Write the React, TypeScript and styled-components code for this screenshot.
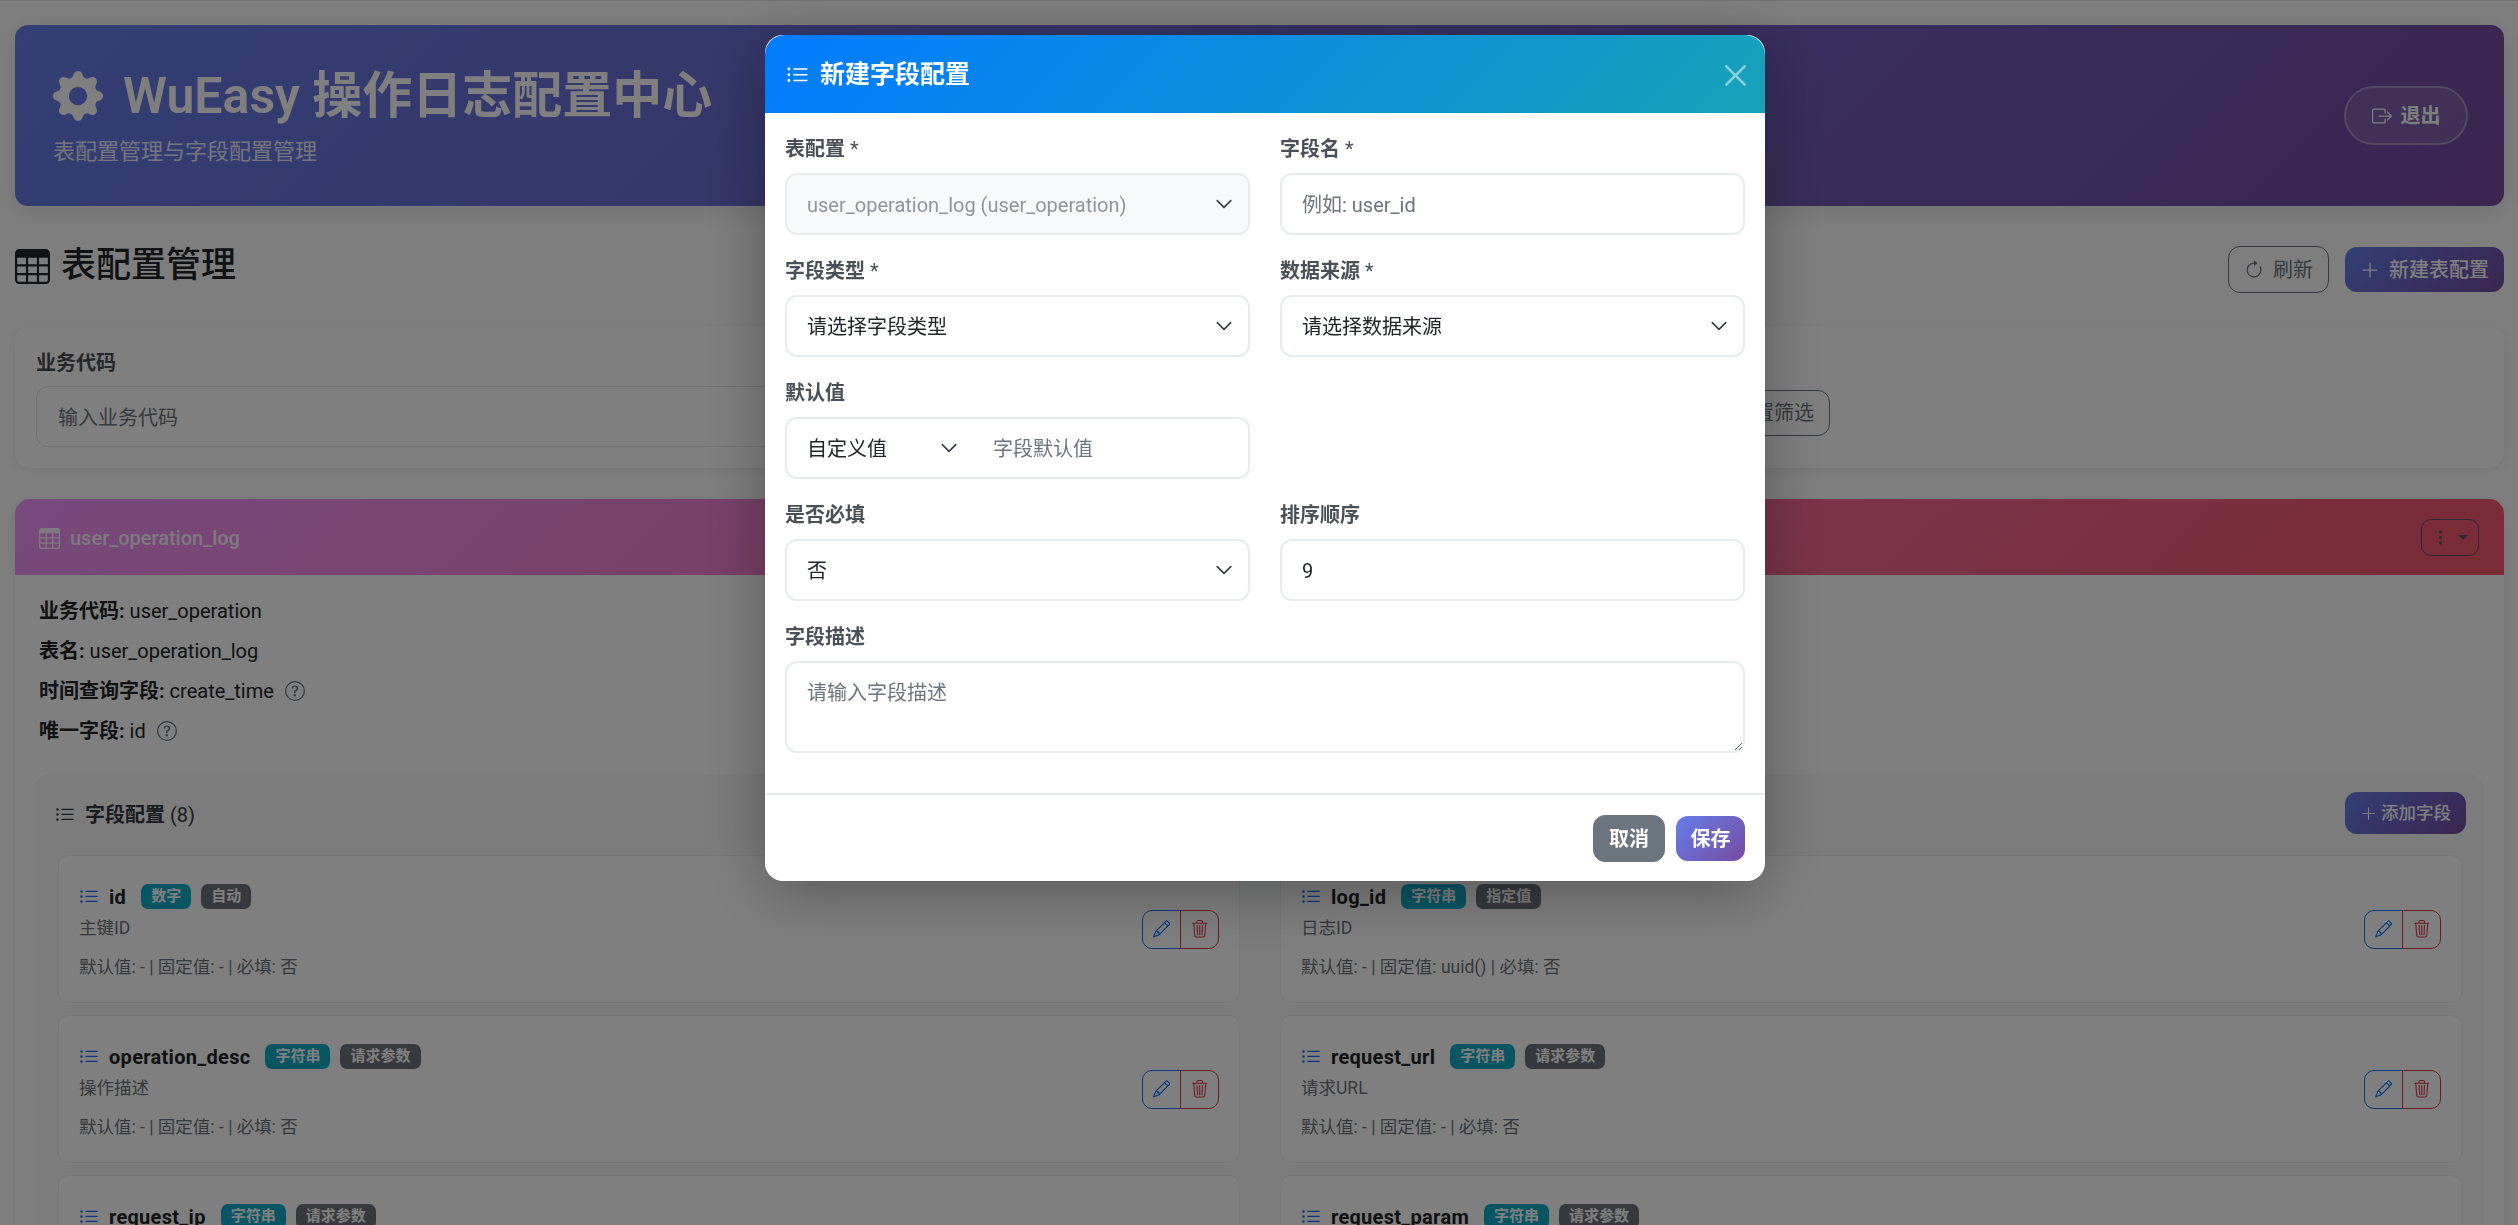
import React from 'react';
import styled, { createGlobalStyle } from 'styled-components';
import {
  BsArrowClockwise,
  BsBoxArrowRight,
  BsGearFill,
  BsListUl,
  BsPencil,
  BsPlusLg,
  BsQuestionCircle,
  BsTable,
  BsThreeDotsVertical,
  BsTrash3,
} from 'react-icons/bs';

const chevron = encodeURIComponent(
  '<svg xmlns="http://www.w3.org/2000/svg" viewBox="0 0 16 16"><path fill="none" stroke="#343a40" stroke-linecap="round" stroke-linejoin="round" stroke-width="1.4" d="m2 5 6 6 6-6"/></svg>'
);

const GlobalStyle = createGlobalStyle`
  html, body {
    margin: 0;
    padding: 0;
    height: 100%;
    overflow: hidden;
    background: #fdfdfd;
  }
  body {
    font-family: Roboto, "Noto Sans CJK SC", sans-serif;
    font-size: 20px;
    line-height: 1.5;
    color: #212529;
  }
  * {
    box-sizing: border-box;
  }
`;

const Page = styled.div`
  height: 1225px;
  overflow: hidden;
  padding: 24px 14px 0 15px;
  border-top: 1px solid #e4e4e4;
`;

const PrimaryGradient = 'linear-gradient(135deg, #667eea 0%, #764ba2 100%)';

const Banner = styled.header`
  height: 181px;
  border-radius: 13px;
  background: ${PrimaryGradient};
  color: #fff;
  padding: 0 36px 0 38px;
  display: flex;
  align-items: center;
  justify-content: space-between;
  box-shadow: 0 5px 25px rgba(0, 0, 0, 0.1);
`;

const BannerText = styled.div`
  padding-top: 2px;
`;

const BannerTitle = styled.h1`
  margin: 0 0 9px;
  font-size: 50px;
  font-weight: 600;
  line-height: 1.2;
  display: flex;
  align-items: center;
  gap: 20px;
`;

const BannerSub = styled.p`
  margin: 0;
  font-size: 22px;
  opacity: 0.85;
`;

const LogoutButton = styled.button`
  width: 124px;
  height: 59px;
  border-radius: 30px;
  border: 2px solid rgba(255, 255, 255, 0.3);
  background: rgba(255, 255, 255, 0.1);
  color: #fff;
  font: inherit;
  font-weight: 600;
  display: flex;
  align-items: center;
  justify-content: center;
  gap: 9px;
`;

const TitleRow = styled.div`
  display: flex;
  align-items: center;
  justify-content: space-between;
  height: 47px;
  margin: 40px 0 33px;
`;

const SectionTitle = styled.h3`
  margin: 0 0 7px;
  font-size: 35px;
  font-weight: 500;
  line-height: 1.2;
  display: flex;
  align-items: center;
  gap: 11px;
`;

const Buttons = styled.div`
  display: flex;
  align-items: center;
  gap: 16px;
`;

const OutlineButton = styled.button`
  height: 47px;
  padding: 0 15px;
  border: 1px solid #6c757d;
  border-radius: 12px;
  background: transparent;
  color: #6c757d;
  font: inherit;
  display: flex;
  align-items: center;
  gap: 9px;
`;

const GradientButton = styled.button<{ $small?: boolean }>`
  height: ${(p) => (p.$small ? '42px' : '45px')};
  padding: 0 15px;
  border: none;
  border-radius: 12px;
  background: ${PrimaryGradient};
  color: #fff;
  font: inherit;
  font-size: ${(p) => (p.$small ? '17.5px' : '20px')};
  font-weight: 500;
  display: flex;
  align-items: center;
  gap: ${(p) => (p.$small ? '4px' : '9px')};
`;

const FilterCard = styled.section`
  height: 142px;
  border-radius: 15px;
  background: #fff;
  box-shadow: 0 3px 12px rgba(0, 0, 0, 0.08);
  padding: 21px;
  display: flex;
  align-items: flex-start;
`;

const FilterField = styled.div`
  width: 1671px;
`;

const FilterButton = styled(OutlineButton)`
  height: 46px;
  margin-top: 43px;
  width: 123px;
  justify-content: flex-end;
`;

const FilterLabel = styled.label`
  display: block;
  height: 30px;
  margin-bottom: 9px;
  line-height: 32px;
  font-weight: 600;
  color: #495057;
`;

const FilterInput = styled.input`
  display: block;
  width: 100%;
  height: 61px;
  padding: 2px 21px 0;
  border: 1px solid #dee2e6;
  border-radius: 12px;
  font: inherit;
  background: #fff;
  &::placeholder {
    color: #6c757d;
  }
`;

const TableCard = styled.section`
  margin-top: 31px;
  border-radius: 15px 15px 0 0;
  background: #fff;
  box-shadow: 0 3px 12px rgba(0, 0, 0, 0.08);
`;

const TableHead = styled.div`
  height: 76px;
  padding: 0 25px 0 24px;
  border-radius: 15px 15px 0 0;
  background: linear-gradient(135deg, #f093fb 0%, #f5576c 100%);
  color: #fff;
  display: flex;
  align-items: center;
  justify-content: space-between;
`;

const TableName = styled.div`
  padding-top: 2px;
  font-weight: 500;
  opacity: 0.9;
  display: flex;
  align-items: center;
  gap: 10px;
`;

const MenuButton = styled.button`
  width: 58px;
  height: 37px;
  padding: 0;
  border: 1px solid #4f565d;
  border-radius: 10px;
  background: transparent;
  color: #4f565d;
  display: flex;
  align-items: center;
  justify-content: center;
  gap: 9px;
  &::after {
    content: '';
    border-top: 5px solid #4f565d;
    border-left: 5px solid transparent;
    border-right: 5px solid transparent;
  }
`;

const TableBody = styled.div`
  padding: 21px 20px 0 19px;
`;

const InfoLine = styled.div`
  height: 30px;
  margin: 0 5px 10px;
  display: flex;
  align-items: center;
  white-space: pre;
  b {
    font-weight: 700;
  }
`;

const HelpIcon = styled(BsQuestionCircle)`
  margin-left: 11px;
  color: #6c757d;
`;

const FieldsPanel = styled.div`
  margin-top: 28px;
  padding: 18px 18px 0 24px;
  border-radius: 15px 15px 0 0;
  background: #f8f9fa;
`;

const FieldsHead = styled.div`
  height: 42px;
  margin-bottom: 21px;
  display: flex;
  align-items: center;
  justify-content: space-between;
`;

const FieldsTitle = styled.div`
  padding-top: 3px;
  color: #343a40;
  display: flex;
  align-items: center;
  gap: 10px;
  margin-left: -3px;
  b {
    font-weight: 600;
  }
`;

const FieldGrid = styled.div`
  display: grid;
  grid-template-columns: 1182px 1182px;
  column-gap: 40px;
  row-gap: 12px;
`;

const FieldItem = styled.div`
  height: 148px;
  padding: 0 20px;
  border: 1px solid #efefef;
  border-radius: 10px;
  background: #fff;
  display: flex;
  align-items: center;
  justify-content: space-between;
`;

const FieldText = styled.div`
  padding-top: 3px;
`;

const FieldName = styled.div`
  display: flex;
  align-items: center;
  height: 30px;
  margin-bottom: 3px;
  color: #0d6efd;
`;

const FieldKey = styled.span`
  margin: 0 15px 0 10px;
  font-weight: 700;
  letter-spacing: 0.3px;
  color: #212529;
`;

const Badge = styled.span<{ $tone: 'info' | 'muted' }>`
  margin-right: 10px;
  padding: 0 10px;
  height: 25px;
  line-height: 25px;
  border-radius: 7px;
  font-size: 15px;
  font-weight: 700;
  color: #fff;
  background: ${(p) => (p.$tone === 'info' ? '#12abc8' : '#6c757d')};
`;

const FieldDesc = styled.div`
  font-size: 17.5px;
  line-height: 26px;
  color: #6c757d;
  margin-bottom: 13px;
`;

const FieldMeta = styled.div`
  font-size: 17.5px;
  line-height: 26px;
  color: #6c757d;
`;

const ActionGroup = styled.div`
  display: flex;
  width: 77px;
  height: 39px;
`;

const ActionButton = styled.button<{ $color: string; $side: 'left' | 'right' }>`
  flex: 1;
  padding: 0;
  border: 1px solid ${(p) => p.$color};
  border-radius: ${(p) => (p.$side === 'left' ? '10px 0 0 10px' : '0 10px 10px 0')};
  background: transparent;
  color: ${(p) => p.$color};
  font-size: 17.5px;
  display: flex;
  align-items: center;
  justify-content: center;
  margin-left: ${(p) => (p.$side === 'right' ? '-1px' : '0')};
`;

const Backdrop = styled.div`
  position: fixed;
  inset: 0;
  background: rgba(0, 0, 0, 0.5);
  display: flex;
  justify-content: center;
  align-items: flex-start;
  padding: 35px 0 0 12px;
`;

const Modal = styled.div`
  width: 1000px;
  height: 846px;
  border-radius: 18px;
  background: #fff;
  box-shadow: 0 12px 60px rgba(0, 0, 0, 0.3);
`;

const ModalHead = styled.div`
  height: 78px;
  padding: 2px 19px 0 21px;
  border-radius: 20px 20px 0 0;
  background: linear-gradient(135deg, #007bff 0%, #17a2b8 100%);
  color: #fff;
  display: flex;
  align-items: center;
  justify-content: space-between;
`;

const ModalTitle = styled.h5`
  margin: 0;
  font-size: 25px;
  font-weight: 600;
  display: flex;
  align-items: center;
  gap: 11px;
`;

const CloseButton = styled.button`
  padding: 0;
  border: none;
  background: transparent;
  color: #fff;
  opacity: 0.5;
  width: 21px;
  height: 21px;
`;

const ModalBody = styled.div`
  padding: 21px 20px 0;
  display: grid;
  grid-template-columns: 465px 465px;
  column-gap: 30px;
  row-gap: 21px;
`;

const Group = styled.div<{ $wide?: boolean }>`
  grid-column: ${(p) => (p.$wide ? '1 / span 2' : 'auto')};
`;

const FormLabel = styled.label`
  display: block;
  height: 30px;
  margin-bottom: 9px;
  font-weight: 600;
  color: #495057;
  span {
    font-weight: 400;
  }
`;

const control = `
  display: block;
  width: 100%;
  border: 2px solid #e9ecef;
  border-radius: 12px;
  font: inherit;
  color: #212529;
  background-color: #fff;
  padding: 2px 20px 0;
  &::placeholder {
    color: #6c757d;
  }
`;

const FormInput = styled.input`
  ${control}
  height: 62px;
`;

const FormSelect = styled.select`
  ${control}
  height: 62px;
  appearance: none;
  background-image: url("data:image/svg+xml,${chevron}");
  background-repeat: no-repeat;
  background-position: right 15px center;
  background-size: 18px 18px;
  &:disabled {
    background-color: #f8f9fa;
    color: #8f959b;
    opacity: 1;
  }
`;

const InputGroup = styled.div`
  display: flex;
  height: 62px;
  border: 2px solid #e9ecef;
  border-radius: 12px;
`;

const GroupSelect = styled(FormSelect)`
  width: 186px;
  height: 58px;
  border: none;
  flex: none;
`;

const GroupInput = styled(FormInput)`
  height: 58px;
  border: none;
  background: transparent;
`;

const FormArea = styled.textarea`
  ${control}
  height: 92px;
  padding-top: 15px;
  line-height: 30px;
  resize: vertical;
`;

const ModalFoot = styled.div`
  margin-top: 40px;
  padding: 20px;
  border-top: 2px solid #e9ecef;
  display: flex;
  justify-content: flex-end;
  align-items: center;
  gap: 11px;
`;

const CancelButton = styled.button`
  width: 72px;
  height: 47px;
  padding: 0;
  border: 1px solid #6c757d;
  border-radius: 12px;
  background: #6c757d;
  color: #fff;
  font: inherit;
  font-weight: 600;
`;

const SaveButton = styled.button`
  width: 69px;
  height: 45px;
  padding: 0;
  border: none;
  border-radius: 12px;
  background: ${PrimaryGradient};
  color: #fff;
  font: inherit;
  font-weight: 600;
`;

type Field = { name: string; type: string; source: string; desc: string; fixed: string };

const fields: Field[] = [
  { name: 'id', type: '数字', source: '自动', desc: '主键ID', fixed: '-' },
  { name: 'log_id', type: '字符串', source: '指定值', desc: '日志ID', fixed: 'uuid()' },
  { name: 'operation_desc', type: '字符串', source: '请求参数', desc: '操作描述', fixed: '-' },
  { name: 'request_url', type: '字符串', source: '请求参数', desc: '请求URL', fixed: '-' },
  { name: 'request_ip', type: '字符串', source: '请求参数', desc: '请求IP', fixed: '-' },
  { name: 'request_param', type: '字符串', source: '请求参数', desc: '请求参数', fixed: '-' },
];

const App: React.FC = () => {
  return (
    <>
      <GlobalStyle />
      <Page>
        <Banner>
          <BannerText>
            <BannerTitle>
              <BsGearFill size={50} />
              WuEasy 操作日志配置中心
            </BannerTitle>
            <BannerSub>表配置管理与字段配置管理</BannerSub>
          </BannerText>
          <LogoutButton>
            <BsBoxArrowRight size={20} />
            退出
          </LogoutButton>
        </Banner>

        <TitleRow>
          <SectionTitle>
            <BsTable size={35} />
            表配置管理
          </SectionTitle>
          <Buttons>
            <OutlineButton>
              <BsArrowClockwise size={20} />
              刷新
            </OutlineButton>
            <GradientButton>
              <BsPlusLg size={20} />
              新建表配置
            </GradientButton>
          </Buttons>
        </TitleRow>

        <FilterCard>
          <FilterField>
            <FilterLabel>业务代码</FilterLabel>
            <FilterInput placeholder="输入业务代码" />
          </FilterField>
          <FilterButton>重置筛选</FilterButton>
        </FilterCard>

        <TableCard>
          <TableHead>
            <TableName>
              <BsTable size={21} />
              user_operation_log
            </TableName>
            <MenuButton>
              <BsThreeDotsVertical size={17} />
            </MenuButton>
          </TableHead>
          <TableBody>
            <InfoLine>
              <b>业务代码:</b> user_operation
            </InfoLine>
            <InfoLine>
              <b>表名:</b> user_operation_log
            </InfoLine>
            <InfoLine>
              <b>时间查询字段:</b> create_time
              <HelpIcon size={20} />
            </InfoLine>
            <InfoLine>
              <b>唯一字段:</b> id
              <HelpIcon size={20} />
            </InfoLine>

            <FieldsPanel>
              <FieldsHead>
                <FieldsTitle>
                  <BsListUl size={20} />
                  <span>
                    <b>字段配置</b> (8)
                  </span>
                </FieldsTitle>
                <GradientButton $small>
                  <BsPlusLg size={17} />
                  添加字段
                </GradientButton>
              </FieldsHead>
              <FieldGrid>
                {fields.map((f) => (
                  <FieldItem key={f.name}>
                    <FieldText>
                      <FieldName>
                        <BsListUl size={20} />
                        <FieldKey>{f.name}</FieldKey>
                        <Badge $tone="info">{f.type}</Badge>
                        <Badge $tone="muted">{f.source}</Badge>
                      </FieldName>
                      <FieldDesc>{f.desc}</FieldDesc>
                      <FieldMeta>默认值: - | 固定值: {f.fixed} | 必填: 否</FieldMeta>
                    </FieldText>
                    <ActionGroup>
                      <ActionButton $color="#0d6efd" $side="left">
                        <BsPencil />
                      </ActionButton>
                      <ActionButton $color="#dc3545" $side="right">
                        <BsTrash3 />
                      </ActionButton>
                    </ActionGroup>
                  </FieldItem>
                ))}
              </FieldGrid>
            </FieldsPanel>
          </TableBody>
        </TableCard>
      </Page>

      <Backdrop>
        <Modal>
          <ModalHead>
            <ModalTitle>
              <BsListUl size={23} />
              新建字段配置
            </ModalTitle>
            <CloseButton aria-label="关闭">
              <svg viewBox="0 0 16 16" width="21" height="21" fill="currentColor">
                <path d="M.293.293a1 1 0 0 1 1.414 0L8 6.586 14.293.293a1 1 0 1 1 1.414 1.414L9.414 8l6.293 6.293a1 1 0 0 1-1.414 1.414L8 9.414l-6.293 6.293a1 1 0 0 1-1.414-1.414L6.586 8 .293 1.707a1 1 0 0 1 0-1.414z" />
              </svg>
            </CloseButton>
          </ModalHead>
          <ModalBody>
            <Group>
              <FormLabel>
                表配置 <span>*</span>
              </FormLabel>
              <FormSelect disabled>
                <option>user_operation_log (user_operation)</option>
              </FormSelect>
            </Group>
            <Group>
              <FormLabel>
                字段名 <span>*</span>
              </FormLabel>
              <FormInput placeholder="例如: user_id" />
            </Group>
            <Group>
              <FormLabel>
                字段类型 <span>*</span>
              </FormLabel>
              <FormSelect>
                <option>请选择字段类型</option>
              </FormSelect>
            </Group>
            <Group>
              <FormLabel>
                数据来源 <span>*</span>
              </FormLabel>
              <FormSelect>
                <option>请选择数据来源</option>
              </FormSelect>
            </Group>
            <Group>
              <FormLabel>默认值</FormLabel>
              <InputGroup>
                <GroupSelect>
                  <option>自定义值</option>
                </GroupSelect>
                <GroupInput placeholder="字段默认值" />
              </InputGroup>
            </Group>
            <Group />
            <Group>
              <FormLabel>是否必填</FormLabel>
              <FormSelect defaultValue="否">
                <option>否</option>
                <option>是</option>
              </FormSelect>
            </Group>
            <Group>
              <FormLabel>排序顺序</FormLabel>
              <FormInput type="number" defaultValue={9} />
            </Group>
            <Group $wide>
              <FormLabel>字段描述</FormLabel>
              <FormArea placeholder="请输入字段描述" />
            </Group>
          </ModalBody>
          <ModalFoot>
            <CancelButton>取消</CancelButton>
            <SaveButton>保存</SaveButton>
          </ModalFoot>
        </Modal>
      </Backdrop>
    </>
  );
};

export default App;
